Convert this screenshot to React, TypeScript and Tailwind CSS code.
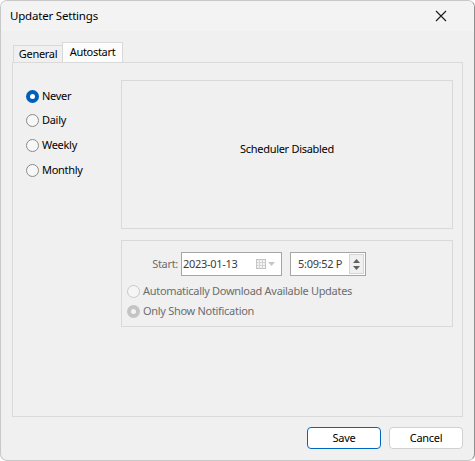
import React from 'react';

const font = { fontFamily: '"Noto Sans", "Open Sans", sans-serif' };

function Radio({ label, checked, disabled }: { label: string; checked?: boolean; disabled?: boolean }) {
  let dot: React.ReactNode;
  if (checked && !disabled) {
    dot = (
      <span className="w-[13px] h-[13px] rounded-full bg-[#005fb8] flex items-center justify-center shrink-0">
        <span className="w-[5px] h-[5px] rounded-full bg-white" />
      </span>
    );
  } else if (checked && disabled) {
    dot = (
      <span className="w-[13px] h-[13px] rounded-full bg-[#c4c4c4] flex items-center justify-center shrink-0">
        <span className="w-[5px] h-[5px] rounded-full bg-[#f3f3f3]" />
      </span>
    );
  } else {
    dot = (
      <span
        className={
          'w-[13px] h-[13px] rounded-full border shrink-0 ' +
          (disabled ? 'border-[#c9c9c9] bg-[#f5f5f5]' : 'border-[#8a8a8a] bg-[#f7f7f7]')
        }
      />
    );
  }
  return (
    <div className="flex items-center gap-[3px] h-full">
      {dot}
      <span className={disabled ? 'text-[#6d6d6d]' : 'text-black'}>{label}</span>
    </div>
  );
}

export default function App() {
  return (
    <div
      className="w-[475px] h-[461px] bg-[#f0f0f0] border border-[#c8c8c8] border-r-[#8f8f8f] rounded-[7px] flex flex-col text-[11px] tracking-[-0.3px] text-black overflow-hidden"
      style={font}
    >
      {/* title bar */}
      <div className="h-[30px] bg-[#f3f3f3] flex items-center justify-between pl-[9px] pr-[27px] shrink-0">
        <span className="text-[11.5px] tracking-[-0.2px]">Updater Settings</span>
        <svg width="12" height="12" viewBox="0 0 12 12">
          <path d="M1 1 L11 11 M11 1 L1 11" stroke="#1a1a1a" strokeWidth="1.1" />
        </svg>
      </div>

      <div className="flex flex-col px-[11px] pt-[11px]">
        {/* tabs */}
        <div className="flex items-end h-[20px] pl-[1px]">
          <div className="h-[17px] w-[49px] border-l border-t border-[#d9d9d9] bg-[#f0f0f0] flex items-center justify-center">
            General
          </div>
          <div className="h-[21px] w-[61px] border border-b-0 border-[#d9d9d9] bg-[#fcfcfc] flex items-start justify-center pt-[1px] -mb-[1px]">
            Autostart
          </div>
        </div>

        {/* panel */}
        <div className="h-[355px] w-[451px] border border-[#dadada] bg-[#f0f0f0] flex pl-[13px] pt-[17px]">
          <div className="w-[95px] flex flex-col pt-[4px]">
            <div className="h-[24px]"><Radio label="Never" checked /></div>
            <div className="h-[25px]"><Radio label="Daily" /></div>
            <div className="h-[25px]"><Radio label="Weekly" /></div>
            <div className="h-[25px]"><Radio label="Monthly" /></div>
          </div>

          <div className="w-[332px] flex flex-col gap-[11px]">
            <div className="h-[149px] border border-[#d9d9d9] flex items-center justify-center pb-[10px]">
              Scheduler Disabled
            </div>

            <div className="h-[87px] border border-[#d9d9d9] flex flex-col pl-[5px] pt-[11px]">
              <div className="flex items-center h-[24px]">
                <span className="w-[54px] text-right pr-[3px] text-[#6d6d6d]">Start:</span>
                <div className="w-[101px] h-[24px] border border-[#a5a5a5] bg-white flex items-center pl-[1px] pr-[6px] justify-between">
                  <span className="text-[#3c3c3c]">2023-01-13</span>
                  <span className="flex items-center gap-[2px]">
                    <svg width="10" height="10" viewBox="0 0 10 10">
                      <rect x="0.5" y="0.5" width="9" height="9" fill="#f4f4f4" stroke="#c2c2c2" />
                      <path d="M0.5 3.5 H9.5 M0.5 6.5 H9.5 M3.5 0.5 V9.5 M6.5 0.5 V9.5" stroke="#d4d4d4" />
                    </svg>
                    <svg width="7" height="4" viewBox="0 0 7 4">
                      <path d="M0 0 H7 L3.5 4 Z" fill="#c6c6c6" />
                    </svg>
                  </span>
                </div>
                <div className="ml-[8px] w-[76px] h-[24px] border border-[#a5a5a5] bg-white flex items-center">
                  <span className="pl-[7px] w-[55px] overflow-hidden whitespace-nowrap text-[#3c3c3c]">5:09:52 P</span>
                  <div className="ml-auto mr-[1px] w-[15px] h-[20px] border border-[#d4d4d4] bg-[#f0f0f0] flex flex-col items-center justify-center gap-[3px]">
                    <svg width="7" height="4" viewBox="0 0 7 4">
                      <path d="M0 4 H7 L3.5 0 Z" fill="#606060" />
                    </svg>
                    <svg width="7" height="4" viewBox="0 0 7 4">
                      <path d="M0 0 H7 L3.5 4 Z" fill="#606060" />
                    </svg>
                  </div>
                </div>
              </div>
              <div className="h-[20px] mt-[5px]">
                <Radio label="Automatically Download Available Updates" disabled />
              </div>
              <div className="h-[20px]">
                <Radio label="Only Show Notification" checked disabled />
              </div>
            </div>
          </div>
        </div>

        {/* buttons */}
        <div className="flex justify-end gap-[8px] pt-[10px]">
          <button className="w-[74px] h-[22px] rounded-[4px] border border-[#0067c0] bg-white text-black text-[11px]">
            Save
          </button>
          <button className="w-[74px] h-[22px] rounded-[4px] border border-[#d0d0d0] bg-white text-black text-[11px]">
            Cancel
          </button>
        </div>
      </div>
    </div>
  );
}
